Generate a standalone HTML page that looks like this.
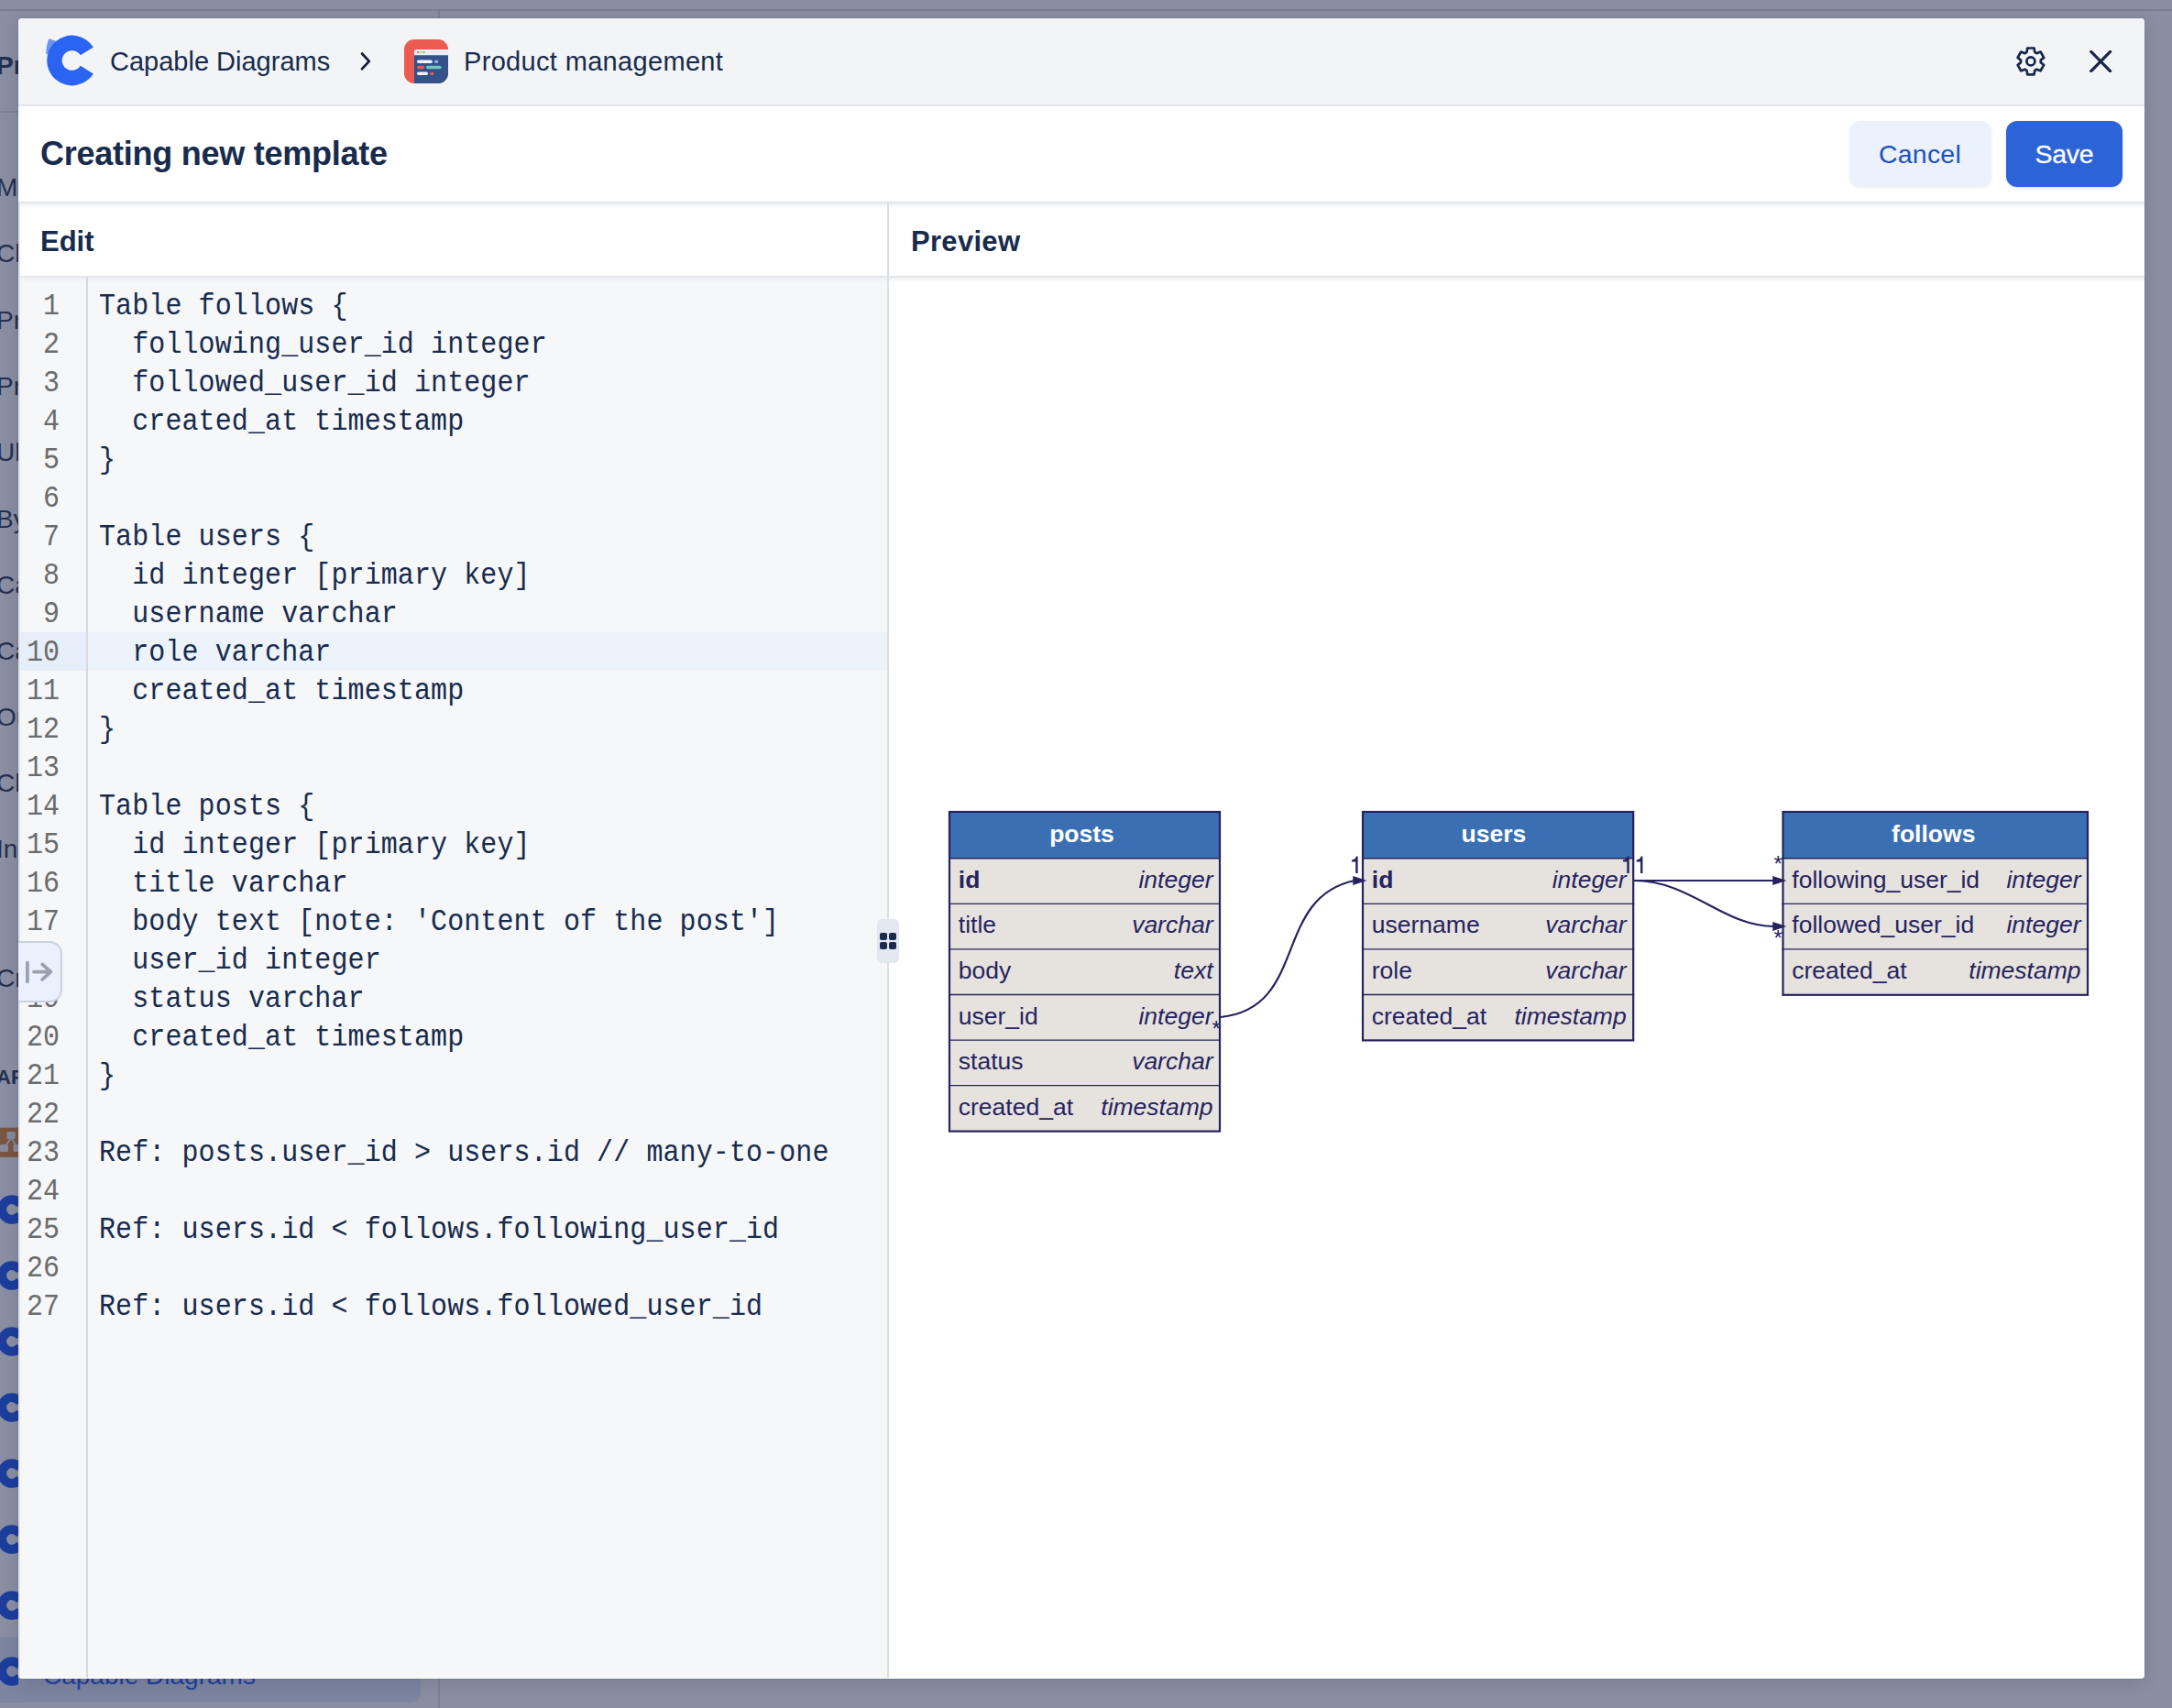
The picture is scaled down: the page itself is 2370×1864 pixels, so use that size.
<!DOCTYPE html>
<html><head><meta charset="utf-8">
<style>
*{box-sizing:border-box;margin:0;padding:0}
html,body{width:2370px;height:1864px;overflow:hidden}
body{background:#898ea2;font-family:"Liberation Sans",sans-serif;position:relative;color:#172b4d}
.a{position:absolute}
.t{position:absolute;white-space:pre;line-height:1}
.bk{color:#26304f;font-size:28px;left:-4px}
.ln{position:absolute;left:20px;width:75px;height:42px;margin-top:2px;transform:scaleY(1.08);transform-origin:0 29px;text-align:right;padding-right:30px;font-family:"Liberation Mono",monospace;font-size:30px;line-height:42px;color:#6b6b6b;white-space:pre}
.cl{position:absolute;left:108px;height:42px;letter-spacing:.1px;margin-top:2px;transform:scaleY(1.09);transform-origin:0 29px;font-family:"Liberation Mono",monospace;font-size:30px;line-height:42px;color:#172b4d;white-space:pre}
</style></head><body>
<div class="a" style="left:0;top:10px;width:2370px;height:2px;background:#767d91"></div>
<div class="a" style="left:0;top:121px;width:480px;height:2px;background:#7a8095"></div>
<div class="a" style="left:478px;top:12px;width:2px;height:1852px;background:#7a8195"></div>
<div class="a" style="left:-10px;top:1787px;width:469px;height:71px;background:#7c84a0;border-radius:10px"></div>
<div class="t" style="left:47px;top:1815px;font-size:28px;color:#1f3f9e">Capable Diagrams</div>
<div class="t bk" style="top:58px;font-weight:bold;">Pr</div>
<div class="t bk" style="top:191px;">M</div>
<div class="t bk" style="top:263px;">Cl</div>
<div class="t bk" style="top:336px;">Pr</div>
<div class="t bk" style="top:408px;">Pr</div>
<div class="t bk" style="top:480px;">Ul</div>
<div class="t bk" style="top:553px;">By</div>
<div class="t bk" style="top:625px;">Ca</div>
<div class="t bk" style="top:697px;">Ca</div>
<div class="t bk" style="top:769px;">Ou</div>
<div class="t bk" style="top:841px;">Cl</div>
<div class="t bk" style="top:913px;">In</div>
<div class="t bk" style="top:1054px;">Cr</div>
<div class="t bk" style="top:1165px;font-size:22px;font-weight:bold">AP</div>
<svg class="a" style="left:0;top:1302.5px" width="20" height="34"><path d="M26.44 8.70 A15.8 15.8 0 1 0 26.44 25.30 L18.02 20.10 A5.9 5.9 0 1 1 18.02 13.90 Z" fill="#1c3d9c"/></svg>
<svg class="a" style="left:0;top:1374.6px" width="20" height="34"><path d="M26.44 8.70 A15.8 15.8 0 1 0 26.44 25.30 L18.02 20.10 A5.9 5.9 0 1 1 18.02 13.90 Z" fill="#1c3d9c"/></svg>
<svg class="a" style="left:0;top:1446.7px" width="20" height="34"><path d="M26.44 8.70 A15.8 15.8 0 1 0 26.44 25.30 L18.02 20.10 A5.9 5.9 0 1 1 18.02 13.90 Z" fill="#1c3d9c"/></svg>
<svg class="a" style="left:0;top:1518.8px" width="20" height="34"><path d="M26.44 8.70 A15.8 15.8 0 1 0 26.44 25.30 L18.02 20.10 A5.9 5.9 0 1 1 18.02 13.90 Z" fill="#1c3d9c"/></svg>
<svg class="a" style="left:0;top:1590.9px" width="20" height="34"><path d="M26.44 8.70 A15.8 15.8 0 1 0 26.44 25.30 L18.02 20.10 A5.9 5.9 0 1 1 18.02 13.90 Z" fill="#1c3d9c"/></svg>
<svg class="a" style="left:0;top:1663.0px" width="20" height="34"><path d="M26.44 8.70 A15.8 15.8 0 1 0 26.44 25.30 L18.02 20.10 A5.9 5.9 0 1 1 18.02 13.90 Z" fill="#1c3d9c"/></svg>
<svg class="a" style="left:0;top:1735.1px" width="20" height="34"><path d="M26.44 8.70 A15.8 15.8 0 1 0 26.44 25.30 L18.02 20.10 A5.9 5.9 0 1 1 18.02 13.90 Z" fill="#1c3d9c"/></svg>
<svg class="a" style="left:0;top:1807.2px" width="20" height="34"><path d="M26.44 8.70 A15.8 15.8 0 1 0 26.44 25.30 L18.02 20.10 A5.9 5.9 0 1 1 18.02 13.90 Z" fill="#1c3d9c"/></svg>
<svg class="a" style="left:0;top:1230px" width="20" height="33"><rect x="-10" y="0.6" width="40" height="32.3" fill="#7a5540"/><path d="M12 12 L5 22 M12 12 L19 22" stroke="#858a9d" stroke-width="2"/><rect x="7.4" y="5" width="9.4" height="8" rx="1.5" fill="#858a9d"/><rect x="0" y="19" width="9" height="8" rx="1.5" fill="#858a9d"/><rect x="14.5" y="19" width="9" height="8" rx="1.5" fill="#858a9d"/></svg>
<div class="a" style="left:20px;top:20px;width:2320px;height:1812px;background:#fff;border-radius:4px;overflow:hidden;box-shadow:0 0 0 1px rgba(9,20,50,.06),0 4px 18px rgba(9,20,50,.13)"><div class="a" style="left:0;top:0;width:2320px;height:94px;background:#f3f4f6"></div><div class="a" style="left:0;top:94px;width:2320px;height:2px;background:#e2e4e8"></div><div class="a" style="left:0;top:282px;width:948px;height:1529px;background:#f6f7f9"></div></div>
<div class="t" style="left:120px;top:52.5px;font-size:29px;color:#172b4d">Capable Diagrams</div>
<div class="t" style="left:506px;top:52.5px;font-size:29px;letter-spacing:.33px;color:#172b4d">Product management</div>
<div class="t" style="left:44px;top:150px;font-size:36px;font-weight:bold;color:#172b4d;letter-spacing:-0.25px">Creating new template</div>
<div class="a" style="left:20px;top:220px;width:2320px;height:2px;background:#e4e6ea"></div>
<div class="a" style="left:20px;top:222px;width:2320px;height:5px;background:linear-gradient(#eef0f3,#fff0)"></div>
<div class="a" style="left:20px;top:301px;width:2320px;height:2px;background:#e4e6ea"></div>
<div class="a" style="left:20px;top:303px;width:2320px;height:5px;background:linear-gradient(#eef0f3,#fff0)"></div>
<div class="a" style="left:968px;top:221px;width:2px;height:1610px;background:#dcdee3"></div>
<div class="t" style="left:44px;top:247.5px;font-size:31px;font-weight:bold;color:#172b4d">Edit</div>
<div class="t" style="left:994px;top:247.5px;font-size:31px;font-weight:bold;color:#172b4d;letter-spacing:.3px">Preview</div>
<div class="a" style="left:20px;top:690px;width:75px;height:42px;background:#e6eef9"></div>
<div class="a" style="left:96px;top:690px;width:872px;height:42px;background:#edf3fb"></div>
<div class="a" style="left:20px;top:222px;width:2px;height:1609px;background:#e2e4e8"></div>
<div class="a" style="left:94px;top:303px;width:2px;height:1528px;background:#d9d9db"></div>
<div class="ln" style="top:312px">1</div>
<div class="cl" style="top:312px">Table follows {</div>
<div class="ln" style="top:354px">2</div>
<div class="cl" style="top:354px">  following_user_id integer</div>
<div class="ln" style="top:396px">3</div>
<div class="cl" style="top:396px">  followed_user_id integer</div>
<div class="ln" style="top:438px">4</div>
<div class="cl" style="top:438px">  created_at timestamp</div>
<div class="ln" style="top:480px">5</div>
<div class="cl" style="top:480px">}</div>
<div class="ln" style="top:522px">6</div>
<div class="ln" style="top:564px">7</div>
<div class="cl" style="top:564px">Table users {</div>
<div class="ln" style="top:606px">8</div>
<div class="cl" style="top:606px">  id integer [primary key]</div>
<div class="ln" style="top:648px">9</div>
<div class="cl" style="top:648px">  username varchar</div>
<div class="ln" style="top:690px">10</div>
<div class="cl" style="top:690px">  role varchar</div>
<div class="ln" style="top:732px">11</div>
<div class="cl" style="top:732px">  created_at timestamp</div>
<div class="ln" style="top:774px">12</div>
<div class="cl" style="top:774px">}</div>
<div class="ln" style="top:816px">13</div>
<div class="ln" style="top:858px">14</div>
<div class="cl" style="top:858px">Table posts {</div>
<div class="ln" style="top:900px">15</div>
<div class="cl" style="top:900px">  id integer [primary key]</div>
<div class="ln" style="top:942px">16</div>
<div class="cl" style="top:942px">  title varchar</div>
<div class="ln" style="top:984px">17</div>
<div class="cl" style="top:984px">  body text [note: &#x27;Content of the post&#x27;]</div>
<div class="ln" style="top:1026px">18</div>
<div class="cl" style="top:1026px">  user_id integer</div>
<div class="ln" style="top:1068px">19</div>
<div class="cl" style="top:1068px">  status varchar</div>
<div class="ln" style="top:1110px">20</div>
<div class="cl" style="top:1110px">  created_at timestamp</div>
<div class="ln" style="top:1152px">21</div>
<div class="cl" style="top:1152px">}</div>
<div class="ln" style="top:1194px">22</div>
<div class="ln" style="top:1236px">23</div>
<div class="cl" style="top:1236px">Ref: posts.user_id &gt; users.id // many-to-one</div>
<div class="ln" style="top:1278px">24</div>
<div class="ln" style="top:1320px">25</div>
<div class="cl" style="top:1320px">Ref: users.id &lt; follows.following_user_id</div>
<div class="ln" style="top:1362px">26</div>
<div class="ln" style="top:1404px">27</div>
<div class="cl" style="top:1404px">Ref: users.id &lt; follows.followed_user_id</div>
<div class="a" style="left:20px;top:1020px;width:60px;height:80px;overflow:hidden"><div class="a" style="left:-12px;top:7px;width:60px;height:67px;background:#ebf1fc;border:2px solid #c8d1e3;border-radius:14px"></div></div>
<svg class="a" style="left:20px;top:1040px" width="40" height="40"><path d="M9.9 10.6 V31.3" stroke="#9aa1b0" stroke-width="3.8" stroke-linecap="round"/><path d="M17 20.6 H35.2 M26.2 12.4 L35.4 20.6 L26.2 28.9" stroke="#9aa1b0" stroke-width="3.8" fill="none" stroke-linecap="round" stroke-linejoin="round"/></svg>
<div class="a" style="left:957px;top:1003px;width:24px;height:48px;background:#e3e7ef;border-radius:5px"></div>
<div class="a" style="left:960px;top:1018px;width:8px;height:8px;background:#1b2a4e;border-radius:2px"></div>
<div class="a" style="left:970px;top:1018px;width:8px;height:8px;background:#1b2a4e;border-radius:2px"></div>
<div class="a" style="left:960px;top:1028px;width:8px;height:8px;background:#1b2a4e;border-radius:2px"></div>
<div class="a" style="left:970px;top:1028px;width:8px;height:8px;background:#1b2a4e;border-radius:2px"></div>
<div class="a" style="left:2018px;top:132px;width:155px;height:72px;background:#ebf1fd;border-radius:12px;box-shadow:0 1px 3px rgba(9,30,66,.08)"></div>
<div class="t" style="left:2050px;top:153.5px;font-size:28.5px;letter-spacing:.2px;color:#1d4fc4">Cancel</div>
<div class="a" style="left:2189px;top:132px;width:127px;height:72px;background:#2c63d9;border-radius:12px;box-shadow:0 1px 3px rgba(9,30,66,.15)"></div>
<div class="t" style="left:2220.5px;top:153.5px;font-size:28.5px;letter-spacing:-0.3px;color:#fff;-webkit-text-stroke:0.3px #fff">Save</div>
<svg class="a" style="left:0;top:0" width="600" height="110" viewBox="0 0 600 110">
<path d="M53.4 42.2 L60.4 44.4 L63 50 L56 57 L50.3 59.5 Q50 50 53.4 42.2 Z" fill="#6f95f2"/>
<path d="M101.9 51.6 A27.4 27.4 0 1 0 101.9 80.4 L87.8 71.7 A10.85 10.85 0 1 1 87.8 60.3 Z" fill="#2b63f3"/>
<path d="M395 58.5 L402.8 66.8 L395 75.2" fill="none" stroke="#101a36" stroke-width="2.7" stroke-linecap="round" stroke-linejoin="round"/>
<defs><clipPath id="pmclip"><rect x="441" y="43" width="48" height="48" rx="11"/></clipPath></defs>
<g clip-path="url(#pmclip)">
<rect x="441" y="43" width="48" height="48" fill="#eb5b4f"/>
<rect x="452" y="54" width="40" height="40" rx="2" fill="#34528a"/>
<path d="M452 60.3 V56 a2 2 0 0 1 2 -2 H492 V60.3 Z" fill="#e9eef6"/>
<circle cx="456.2" cy="57.1" r="1.1" fill="#eb5b4f"/>
<circle cx="459.4" cy="57.1" r="1.1" fill="#f2b13a"/>
<circle cx="462.6" cy="57.1" r="1.1" fill="#4cc45a"/>
<rect x="455" y="65.4" width="16.8" height="3.5" rx="1.75" fill="#f3f5f9"/>
<rect x="474" y="65.4" width="4.3" height="3.5" rx="1.75" fill="#7db1e8"/>
<rect x="455" y="71.8" width="8" height="3.4" rx="1.7" fill="#eb5b4f"/>
<rect x="465" y="71.8" width="16.6" height="3.4" rx="1.7" fill="#6cc6c1"/>
<rect x="455" y="78.4" width="12" height="3.5" rx="1.75" fill="#f3f5f9"/>
<rect x="469.3" y="78.4" width="4" height="3.5" rx="1.75" fill="#eb5b4f"/>
</g>
</svg>
<svg class="a" style="left:0;top:0" width="2370" height="120" viewBox="0 0 2370 120"><path d="M2211.55 56.91 L2212.25 52.50 L2219.55 52.50 L2220.25 56.91 A10.9 10.9 0 0 1 2222.38 58.14 L2226.55 56.54 L2230.20 62.86 L2226.73 65.67 A10.9 10.9 0 0 1 2226.73 68.13 L2230.20 70.94 L2226.55 77.26 L2222.38 75.66 A10.9 10.9 0 0 1 2220.25 76.89 L2219.55 81.30 L2212.25 81.30 L2211.55 76.89 A10.9 10.9 0 0 1 2209.42 75.66 L2205.25 77.26 L2201.60 70.94 L2205.07 68.13 A10.9 10.9 0 0 1 2205.07 65.67 L2201.60 62.86 L2205.25 56.54 L2209.42 58.14 A10.9 10.9 0 0 1 2211.55 56.91 Z" fill="none" stroke="#172649" stroke-width="2.7" stroke-linejoin="round"/><circle cx="2215.9" cy="66.9" r="4.5" fill="none" stroke="#172649" stroke-width="2.7"/></svg>
<svg class="a" style="left:2270px;top:55px" width="44" height="24" viewBox="2270 55 44 24"><path d="M2281.7 56.3 L2302.6 77.6 M2302.6 56.3 L2281.7 77.6" stroke="#172649" stroke-width="3.2" stroke-linecap="round"/></svg>

<svg class="a" style="left:0;top:0" width="2370" height="1864" viewBox="0 0 2370 1864">
<rect x="1036" y="886" width="295" height="348.60" fill="#e6e3df"/>
<rect x="1036" y="886" width="295" height="50.70" fill="#3a70b3"/>
<line x1="1035" y1="936.70" x2="1332" y2="936.70" stroke="#26235e" stroke-width="1.5"/>
<line x1="1035" y1="986.30" x2="1332" y2="986.30" stroke="#26235e" stroke-width="1.3"/>
<line x1="1035" y1="1035.90" x2="1332" y2="1035.90" stroke="#26235e" stroke-width="1.3"/>
<line x1="1035" y1="1085.50" x2="1332" y2="1085.50" stroke="#26235e" stroke-width="1.3"/>
<line x1="1035" y1="1135.10" x2="1332" y2="1135.10" stroke="#26235e" stroke-width="1.3"/>
<line x1="1035" y1="1184.70" x2="1332" y2="1184.70" stroke="#26235e" stroke-width="1.3"/>
<rect x="1036" y="886" width="295" height="348.60" fill="none" stroke="#26235e" stroke-width="2.2"/>
<text x="1180.5" y="918.8" text-anchor="middle" font-family="Liberation Sans" font-weight="bold" font-size="26.5" fill="#fff">posts</text>
<text x="1045.8" y="968.80" font-family="Liberation Sans" font-size="26.5" fill="#26235e" font-weight="bold">id</text>
<text x="1323.5" y="968.80" text-anchor="end" font-family="Liberation Sans" font-style="italic" font-size="26.5" fill="#26235e">integer</text>
<text x="1045.8" y="1018.40" font-family="Liberation Sans" font-size="26.5" fill="#26235e">title</text>
<text x="1323.5" y="1018.40" text-anchor="end" font-family="Liberation Sans" font-style="italic" font-size="26.5" fill="#26235e">varchar</text>
<text x="1045.8" y="1068.00" font-family="Liberation Sans" font-size="26.5" fill="#26235e">body</text>
<text x="1323.5" y="1068.00" text-anchor="end" font-family="Liberation Sans" font-style="italic" font-size="26.5" fill="#26235e">text</text>
<text x="1045.8" y="1117.60" font-family="Liberation Sans" font-size="26.5" fill="#26235e">user_id</text>
<text x="1323.5" y="1117.60" text-anchor="end" font-family="Liberation Sans" font-style="italic" font-size="26.5" fill="#26235e">integer</text>
<text x="1045.8" y="1167.20" font-family="Liberation Sans" font-size="26.5" fill="#26235e">status</text>
<text x="1323.5" y="1167.20" text-anchor="end" font-family="Liberation Sans" font-style="italic" font-size="26.5" fill="#26235e">varchar</text>
<text x="1045.8" y="1216.80" font-family="Liberation Sans" font-size="26.5" fill="#26235e">created_at</text>
<text x="1323.5" y="1216.80" text-anchor="end" font-family="Liberation Sans" font-style="italic" font-size="26.5" fill="#26235e">timestamp</text>
<rect x="1487" y="886" width="295.20000000000005" height="249.40" fill="#e6e3df"/>
<rect x="1487" y="886" width="295.20000000000005" height="50.70" fill="#3a70b3"/>
<line x1="1486" y1="936.70" x2="1783.2" y2="936.70" stroke="#26235e" stroke-width="1.5"/>
<line x1="1486" y1="986.30" x2="1783.2" y2="986.30" stroke="#26235e" stroke-width="1.3"/>
<line x1="1486" y1="1035.90" x2="1783.2" y2="1035.90" stroke="#26235e" stroke-width="1.3"/>
<line x1="1486" y1="1085.50" x2="1783.2" y2="1085.50" stroke="#26235e" stroke-width="1.3"/>
<rect x="1487" y="886" width="295.20000000000005" height="249.40" fill="none" stroke="#26235e" stroke-width="2.2"/>
<text x="1629.8999999999999" y="918.8" text-anchor="middle" font-family="Liberation Sans" font-weight="bold" font-size="26.5" fill="#fff">users</text>
<text x="1496.8" y="968.80" font-family="Liberation Sans" font-size="26.5" fill="#26235e" font-weight="bold">id</text>
<text x="1774.7" y="968.80" text-anchor="end" font-family="Liberation Sans" font-style="italic" font-size="26.5" fill="#26235e">integer</text>
<text x="1496.8" y="1018.40" font-family="Liberation Sans" font-size="26.5" fill="#26235e">username</text>
<text x="1774.7" y="1018.40" text-anchor="end" font-family="Liberation Sans" font-style="italic" font-size="26.5" fill="#26235e">varchar</text>
<text x="1496.8" y="1068.00" font-family="Liberation Sans" font-size="26.5" fill="#26235e">role</text>
<text x="1774.7" y="1068.00" text-anchor="end" font-family="Liberation Sans" font-style="italic" font-size="26.5" fill="#26235e">varchar</text>
<text x="1496.8" y="1117.60" font-family="Liberation Sans" font-size="26.5" fill="#26235e">created_at</text>
<text x="1774.7" y="1117.60" text-anchor="end" font-family="Liberation Sans" font-style="italic" font-size="26.5" fill="#26235e">timestamp</text>
<rect x="1945.5" y="886" width="332.5" height="199.80" fill="#e6e3df"/>
<rect x="1945.5" y="886" width="332.5" height="50.70" fill="#3a70b3"/>
<line x1="1944.5" y1="936.70" x2="2279" y2="936.70" stroke="#26235e" stroke-width="1.5"/>
<line x1="1944.5" y1="986.30" x2="2279" y2="986.30" stroke="#26235e" stroke-width="1.3"/>
<line x1="1944.5" y1="1035.90" x2="2279" y2="1035.90" stroke="#26235e" stroke-width="1.3"/>
<rect x="1945.5" y="886" width="332.5" height="199.80" fill="none" stroke="#26235e" stroke-width="2.2"/>
<text x="2109.75" y="918.8" text-anchor="middle" font-family="Liberation Sans" font-weight="bold" font-size="26.5" fill="#fff">follows</text>
<text x="1955.3" y="968.80" font-family="Liberation Sans" font-size="26.5" fill="#26235e">following_user_id</text>
<text x="2270.5" y="968.80" text-anchor="end" font-family="Liberation Sans" font-style="italic" font-size="26.5" fill="#26235e">integer</text>
<text x="1955.3" y="1018.40" font-family="Liberation Sans" font-size="26.5" fill="#26235e">followed_user_id</text>
<text x="2270.5" y="1018.40" text-anchor="end" font-family="Liberation Sans" font-style="italic" font-size="26.5" fill="#26235e">integer</text>
<text x="1955.3" y="1068.00" font-family="Liberation Sans" font-size="26.5" fill="#26235e">created_at</text>
<text x="2270.5" y="1068.00" text-anchor="end" font-family="Liberation Sans" font-style="italic" font-size="26.5" fill="#26235e">timestamp</text>
<path d="M1332 1110 C1428 1100 1388 980 1478 961" fill="none" stroke="#26235e" stroke-width="2.2"/>
<path d="M1489 961 L1477 957 L1477 965 Z" fill="#26235e" stroke="#26235e" stroke-width="1.5"/>
<path d="M1783 961 L1937 961" fill="none" stroke="#26235e" stroke-width="2.2"/>
<path d="M1947 961 L1935 957 L1935 965 Z" fill="#26235e" stroke="#26235e" stroke-width="1.5"/>
<path d="M1783 961 C1845 961 1880 1011 1936 1011" fill="none" stroke="#26235e" stroke-width="2.2"/>
<path d="M1947 1011 L1935 1007 L1935 1015 Z" fill="#26235e" stroke="#26235e" stroke-width="1.5"/>
<path d="M1481.6 953 V934.5 H1479.8 Q1479.2 938 1474.9 938.6 V940.6 H1479.2 V953 Z" fill="#26235e"/>
<path d="M1777.7 953 V934.5 H1775.9 Q1775.3 938 1771.0 938.6 V940.6 H1775.3 V953 Z" fill="#26235e"/>
<path d="M1792.4 953 V934.5 H1790.6 Q1790.0 938 1785.7 938.6 V940.6 H1790.0 V953 Z" fill="#26235e"/>
<text x="1322.5" y="1131" font-family="Liberation Sans" font-size="24" fill="#26235e">*</text>
<text x="1935.5" y="950.5" font-family="Liberation Sans" font-size="24" fill="#26235e">*</text>
<text x="1935.5" y="1032" font-family="Liberation Sans" font-size="24" fill="#26235e">*</text>
</svg>
</body></html>
